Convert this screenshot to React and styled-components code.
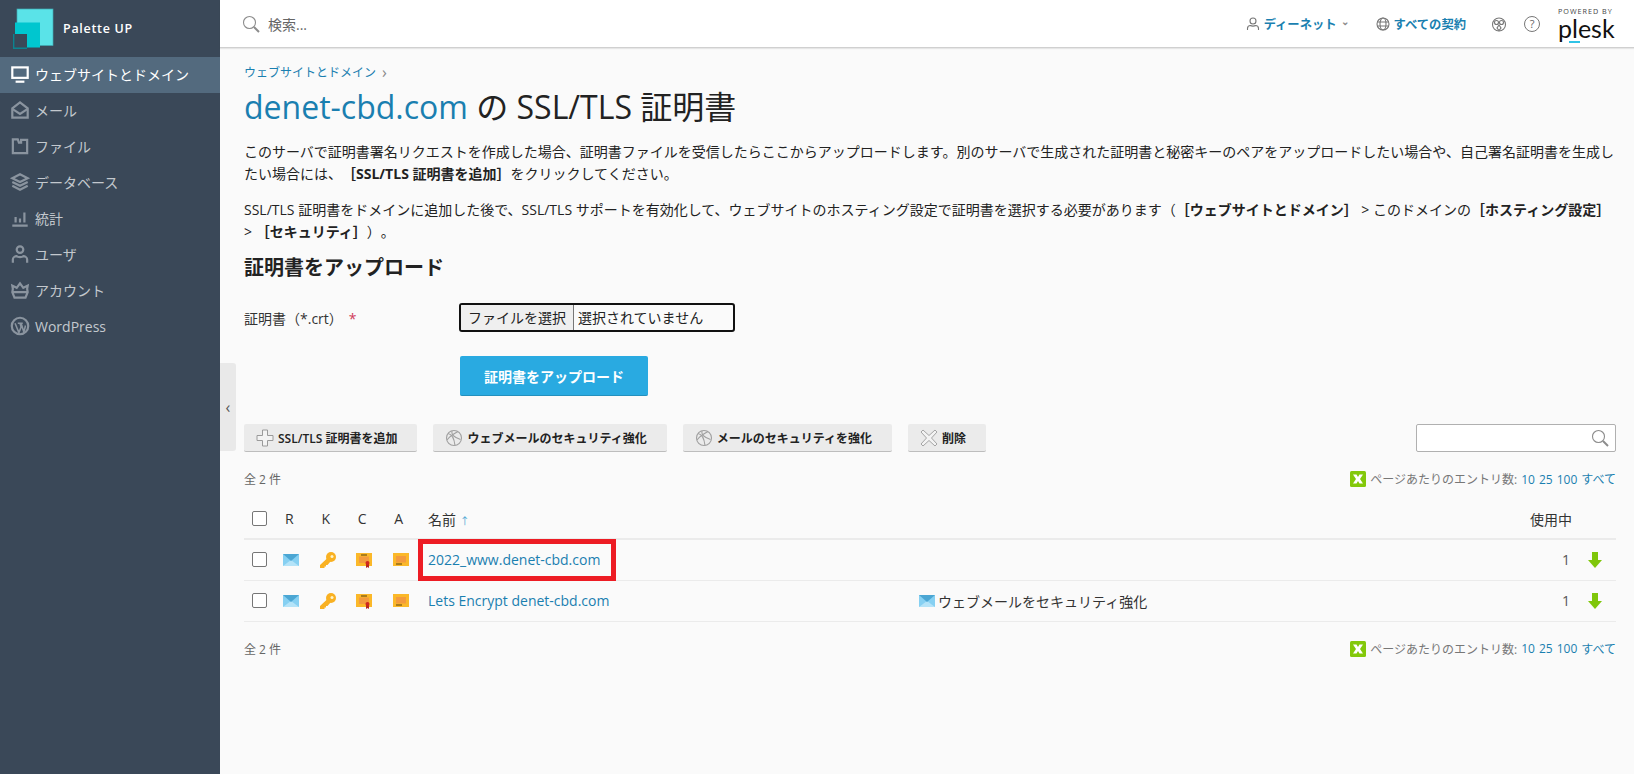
import React from 'react'
import styled, { createGlobalStyle } from 'styled-components'

const FONT = `"Open Sans", "Noto Sans CJK JP", sans-serif`

const GlobalStyle = createGlobalStyle`
    html, body {
        margin: 0;
        padding: 0;
        height: 100%;
        background: #fafafa;
        font-family: ${FONT};
        font-size: 14px;
        color: #222;
        text-spacing-trim: space-all;
    }
    * { box-sizing: border-box; }
`

const Mono = ({ children, size = 22, color = '#8a949f', sw = 2 }) => (
    <svg width={size} height={size} viewBox="0 0 20 20" fill="none" stroke={color} strokeWidth={sw}>
        {children}
    </svg>
)

const navItems = [
    { label: 'ウェブサイトとドメイン', active: true, icon: <><rect x="3" y="4" width="14" height="9.500" /><path d="M6 17h8" /></> },
    { label: 'メール', icon: <><path d="M3 8.500 10 3l7 5.500V17H3z" /><path d="M3 9l7 4.500L17 9" /></> },
    { label: 'ファイル', icon: <path d="M3.500 4H8l1 3h2V4.500h5.500V16.500h-13z" /> },
    { label: 'データベース', icon: <><path d="M10 3l7 3.500-7 3.500-7-3.500z" /><path d="M3 10l7 3.500 7-3.500" /><path d="M3 13.500 10 17l7-3.500" /></> },
    { label: '統計', icon: <path d="M3 17h14M6 14V9M10 14V10.500M14 14V5" /> },
    { label: 'ユーザ', icon: <><circle cx="10" cy="6" r="3" /><path d="M3.500 18v-3c0-2 2-3 3.500-3 1 1 5 1 6 0 1.500 0 3.500 1 3.500 3v3" /></> },
    { label: 'アカウント', icon: <path d="M3.500 9 3 6l4 2 3-4 3 4 4-2-.5 3 .5 3-2 5H5l-2-5zM4 12h12" /> },
    { label: 'WordPress', icon: <><circle cx="10" cy="10" r="7.500" /><path d="M5.500 7.500 9 16l2-5-1-3.500M8 7.500h4.500M11 7.500l2.500 8 1.500-6" strokeWidth="1.400" /></> },
]

const Globe = ({ size = 18, color = '#a0a0a0' }) => (
    <svg width={size} height={size} viewBox="0 0 18 18" fill="none" stroke={color} strokeWidth="1.100">
        <circle cx="9" cy="9" r="7.500" />
        <path d="M3 4.500c3 .5 6 3 7 12M2 11c3-4 8-7 11-8.500M7 2c-1 3 1 6 8.500 8.500" />
    </svg>
)

const CertIcon = ({ seal }) => (
    <svg width="16" height="16" viewBox="0 0 16 16">
        <rect y="1" width="16" height="13" fill="#fbb829" />
        <rect x="3" y={seal ? 4.500 : 4} width="10" height="6.500" fill="#f39a3e" />
        <path d={seal ? 'M5 3h6' : 'M3 12h6'} stroke="#5a430e" strokeWidth="1" />
        {seal && <><path d="M10 11v5l1.500-1 1.500 1v-5z" fill="#b7281f" /><circle cx="11.500" cy="11" r="2" fill="#d0281e" /></>}
    </svg>
)

const Mail = () => (
    <svg width="16" height="12" viewBox="0 0 16 12">
        <rect width="16" height="12" fill="#86d0f2" />
        <path d="M0 12 8 6l8 6z" fill="#b4e3f8" />
        <path d="M0 0h16L8 7z" fill="#4ba6d3" />
    </svg>
)

const KeyIcon = () => (
    <svg width="16" height="16" viewBox="0 0 16 16">
        <circle cx="11" cy="5" r="5" fill="#f9b122" />
        <circle cx="12" cy="4.500" r="1.500" fill="#fff3c8" />
        <path d="M7.500 6 0 13v3h4.500v-1.500H6V13h1.500l3-3.500z" fill="#f9b122" />
    </svg>
)

const ArrowDown = () => (
    <svg width="14" height="16" viewBox="0 0 14 16">
        <path d="M4 0h6v8h4l-7 8-7-8h4z" fill="#7fc60a" />
    </svg>
)

const Excel = () => (
    <svg width="16" height="16" viewBox="0 0 16 16">
        <rect width="16" height="16" rx="1.500" fill="#83c80a" />
        <path d="M3 3.500h3.500L8 6l1.500-2.500H13L10 8l3 4.500H9.500L8 10l-1.500 2.500H3L6 8z" fill="#fff" />
    </svg>
)

const Search = ({ size = 18 }) => (
    <svg width={size} height={size} viewBox="0 0 18 18" fill="none" stroke="#8c8c8c" strokeWidth="1.100">
        <circle cx="7.500" cy="7.500" r="6" />
        <path d="M12 12l5 5" strokeWidth="2" />
    </svg>
)

function PerPage() {
    return (
        <PerPageBox>
            <Excel />
            <span>ページあたりのエントリ数:</span>
            <Link>10</Link>
            <Link>25</Link>
            <Link>100</Link>
            <Link>すべて</Link>
        </PerPageBox>
    )
}

function CertRow({ name, marked, extra }) {
    return (
        <tr>
            <Cell><CheckBox /></Cell>
            <Cell><Mail /></Cell>
            <Cell><KeyIcon /></Cell>
            <Cell><CertIcon seal /></Cell>
            <Cell><CertIcon /></Cell>
            <NameCell>
                <Link>{name}</Link>
                {marked && <RedBox />}
            </NameCell>
            <ExtraCell>
                {extra && <ExtraBox><Mail />{extra}</ExtraBox>}
            </ExtraCell>
            <UsedCell>1</UsedCell>
            <ArrowCell><ArrowDown /></ArrowCell>
        </tr>
    )
}

function App() {
    return (
        <Page>
            <GlobalStyle />
            <Sidebar>
                <Brand>
                    <svg width="42" height="42" viewBox="0 0 42 42">
                        <rect x="4" y="1" width="36" height="36.500" fill="#5ae3e8" stroke="#3fa9b3" strokeWidth=".7" />
                        <rect x="2" y="14.500" width="25" height="25" fill="#00c6cf" />
                        <rect x="1" y="26" width="13" height="14" fill="#3a4858" />
                        <path d="M.7 26V40.300H14" fill="none" stroke="#0c8390" strokeWidth="1.400" />
                    </svg>
                    <BrandName>Palette UP</BrandName>
                </Brand>
                {navItems.map(item => (
                    <NavItem key={item.label} $active={item.active}>
                        <Mono color={item.active ? '#fff' : '#8a949f'}>{item.icon}</Mono>
                        <span>{item.label}</span>
                    </NavItem>
                ))}
            </Sidebar>

            <Main>
                <Header>
                    <Search />
                    <SearchHint>検索...</SearchHint>
                    <HeaderRight>
                        <AccountLink>
                            <svg width="14" height="14" viewBox="0 0 14 14" fill="none" stroke="#777" strokeWidth="1.100">
                                <circle cx="7" cy="4" r="3" />
                                <path d="M1.500 13v-1.500C1.500 9.500 3 8.500 4.500 8.500c1 .8 4 .8 5 0 1.500 0 3 1 3 3V13" />
                            </svg>
                            <span>ディーネット</span>
                            <Caret>⌄</Caret>
                        </AccountLink>
                        <HeadLink>
                            <svg width="14" height="14" viewBox="0 0 14 14" fill="none" stroke="#777" strokeWidth="1.100">
                                <circle cx="7" cy="7" r="6" />
                                <ellipse cx="7" cy="7" rx="3" ry="6" />
                                <path d="M1.500 5h11M1.500 9h11" />
                            </svg>
                            <span>すべての契約</span>
                        </HeadLink>
                        <MonkeyIcon width="16" height="16" viewBox="0 0 16 16" fill="none" stroke="#777" strokeWidth="1.100">
                            <circle cx="8" cy="8.500" r="6.500" />
                            <circle cx="5.500" cy="6.500" r="2" />
                            <circle cx="10.500" cy="6.500" r="2" />
                            <path d="M8 9l-2 3 2 2.500 2-2.500z" />
                        </MonkeyIcon>
                        <HelpIcon>?</HelpIcon>
                        <Plesk>
                            <Powered>POWERED BY</Powered>
                            <PleskName>plesk</PleskName>
                            <PleskBar />
                        </Plesk>
                    </HeaderRight>
                </Header>

                <Content>
                    <Crumbs><Link>ウェブサイトとドメイン</Link><CrumbSep>›</CrumbSep></Crumbs>
                    <Title><Link>denet-cbd.com</Link> の SSL/TLS 証明書</Title>
                    <Para>
                        このサーバで証明書署名リクエストを作成した場合、証明書ファイルを受信したらここからアップロードします。別のサーバで生成された証明書と秘密キーのペアをアップロードしたい場合や、自己署名証明書を生成したい場合には、<b>［SSL/TLS 証明書を追加］</b>をクリックしてください。
                    </Para>
                    <Para>
                        SSL/TLS 証明書をドメインに追加した後で、SSL/TLS サポートを有効化して、ウェブサイトのホスティング設定で証明書を選択する必要があります（<b>［ウェブサイトとドメイン］</b> &gt; このドメインの<b>［ホスティング設定］</b> &gt; <b>［セキュリティ］</b>）。
                    </Para>

                    <SectionTitle>証明書をアップロード</SectionTitle>

                    <FormRow>
                        <FieldLabel>証明書（*.crt）<Required>*</Required></FieldLabel>
                        <FileBox>
                            <FileButton>ファイルを選択</FileButton>
                            <FileName>選択されていません</FileName>
                        </FileBox>
                    </FormRow>
                    <UploadButton>証明書をアップロード</UploadButton>

                    <Toolbar>
                        <ToolButton>
                            <svg width="18" height="18" viewBox="0 0 18 18" fill="#f3f3f3" stroke="#9a9a9a">
                                <path d="M6.500 1h5v5.500H17v5h-5.500V17h-5v-5.500H1v-5h5.500z" />
                            </svg>
                            SSL/TLS 証明書を追加
                        </ToolButton>
                        <ToolButton><Globe />ウェブメールのセキュリティ強化</ToolButton>
                        <ToolButton><Globe />メールのセキュリティを強化</ToolButton>
                        <ToolButton>
                            <svg width="18" height="18" viewBox="0 0 18 18" fill="#f3f3f3" stroke="#a5a5a5">
                                <path d="M3 1l6 5.500L15 1l2 2-5.500 6 5.500 6-2 2-6-5.500L3 17l-2-2 5.500-6L1 3z" />
                            </svg>
                            削除
                        </ToolButton>
                        <SearchBox><Search /></SearchBox>
                    </Toolbar>

                    <ListMeta>
                        <Total>全 2 件</Total>
                        <PerPage />
                    </ListMeta>

                    <Table>
                        <thead>
                            <tr>
                                <HeadCell><CheckBox /></HeadCell>
                                <LetterHead>R</LetterHead>
                                <LetterHead>K</LetterHead>
                                <LetterHead>C</LetterHead>
                                <LetterHead>A</LetterHead>
                                <NameHead>名前 <SortMark>↑</SortMark></NameHead>
                                <HeadCell />
                                <UsedHead>使用中</UsedHead>
                                <HeadCell />
                            </tr>
                        </thead>
                        <tbody>
                            <CertRow name="2022_www.denet-cbd.com" marked />
                            <CertRow name="Lets Encrypt denet-cbd.com" extra="ウェブメールをセキュリティ強化" />
                        </tbody>
                    </Table>

                    <ListMeta>
                        <Total>全 2 件</Total>
                        <PerPage />
                    </ListMeta>
                </Content>

                <Collapse>‹</Collapse>
            </Main>
        </Page>
    )
}

export default App

const Page = styled.div`
    display: flex;
    min-height: 100vh;
    height: 774px;
    overflow: hidden;
`

const Sidebar = styled.aside`
    width: 220px;
    flex: none;
    background: #3a4858;
`

const Brand = styled.div`
    height: 57px;
    display: flex;
    align-items: center;
    padding: 0 0 0 13px;
    gap: 8px;
`

const BrandName = styled.div`
    color: #fff;
    font-size: 12.500px;
    font-weight: 600;
    letter-spacing: .7px;
`

const NavItem = styled.div`
    height: 36px;
    display: flex;
    align-items: center;
    gap: 4px;
    padding: 0 0 2px 9px;
    font-size: 14px;
    color: ${p => (p.$active ? '#fff' : '#c3c8ce')};
    background: ${p => (p.$active ? '#536a7e' : 'transparent')};
`

const Main = styled.main`
    flex: 1;
    min-width: 0;
    position: relative;
`

const Header = styled.header`
    height: 48px;
    background: #fff;
    border-bottom: 1px solid #d0d0d0;
    box-shadow: 0 1px 1px rgba(0,0,0,.08);
    display: flex;
    align-items: center;
    padding: 0 17px 0 22px;
`

const SearchHint = styled.span`
    margin-left: 8px;
    font-size: 14px;
    color: #666;
`

const HeaderRight = styled.div`
    margin-left: auto;
    display: flex;
    align-items: center;
    gap: 21px;
`

const HeadLink = styled.div`
    display: flex;
    align-items: center;
    gap: 4px;
    font-size: 12.300px;
    font-weight: 600;
    color: #1a7fb0;
`

const AccountLink = styled(HeadLink)`
    margin-right: 6px;
`

const Caret = styled.span`
    color: #888;
    font-size: 10px;
    margin-top: -5px;
`

const MonkeyIcon = styled.svg`
    margin: 0 -4px 0 4px;
`

const HelpIcon = styled.div`
    width: 16px;
    height: 16px;
    border: 1px solid #777;
    border-radius: 50%;
    font-size: 11px;
    line-height: 14px;
    text-align: center;
    color: #666;
`

const Plesk = styled.div`
    width: 59px;
    position: relative;
    margin-left: -3px;
`

const Powered = styled.div`
    font-size: 7.200px;
    letter-spacing: 1px;
    line-height: 9px;
    white-space: nowrap;
    color: #444;
`

const PleskName = styled.div`
    font-size: 25px;
    line-height: 24px;
    color: #111;
    font-family: "Lato", sans-serif;
    font-weight: 400;
`

const PleskBar = styled.div`
    position: absolute;
    left: 11px;
    bottom: -3px;
    width: 11px;
    height: 2px;
    background: #2fc3e6;
`

const Content = styled.div`
    padding: 15px 18px 0 24px;
`

const Link = styled.span`
    color: #1a7fb0;
`

const Crumbs = styled.div`
    font-size: 12px;
    line-height: 20px;
    display: flex;
    gap: 6px;
`

const CrumbSep = styled.span`
    color: #888;
    font-size: 16px;
    line-height: 18px;
`

const Title = styled.h1`
    font-size: 32px;
    font-weight: 400;
    line-height: 44px;
    margin: 2px 0 12px;
    color: #222;
`

const Para = styled.p`
    margin: 0 0 15px;
    font-size: 14px;
    line-height: 21.500px;
    color: #222;
    b { font-weight: 700; }
`

const SectionTitle = styled.h2`
    font-size: 20px;
    line-height: 26px;
    font-weight: 700;
    margin: -2px 0 22px;
`

const FormRow = styled.div`
    display: flex;
    align-items: center;
`

const FieldLabel = styled.div`
    width: 215px;
    font-size: 14px;
    color: #333;
`

const Required = styled.span`
    color: #d03a5a;
    margin-left: 6px;
`

const FileBox = styled.div`
    width: 276px;
    height: 29px;
    border: 2px solid #111;
    border-radius: 3px;
    display: flex;
    align-items: stretch;
    overflow: hidden;
    font-size: 14px;
`

const FileButton = styled.div`
    width: 113px;
    background: #efefef;
    border-right: 1px solid #777;
    text-align: center;
    line-height: 25px;
`

const FileName = styled.div`
    padding-left: 4px;
    line-height: 25px;
`

const UploadButton = styled.button`
    display: block;
    margin: 24px 0 0 216px;
    width: 188px;
    height: 40px;
    border: none;
    border-bottom: 1px solid #2390bd;
    border-radius: 2px;
    background: #29aae1;
    color: #fff;
    font-family: ${FONT};
    font-size: 14px;
    font-weight: 700;
`

const Toolbar = styled.div`
    margin-top: 28px;
    display: flex;
    align-items: center;
    gap: 16px;
`

const ToolButton = styled.div`
    height: 28px;
    padding: 0 20px 0 12px;
    display: flex;
    align-items: center;
    gap: 4px;
    background: #ebebeb;
    border-bottom: 1px solid #bdbdbd;
    border-radius: 2px;
    font-size: 12px;
    font-weight: 600;
    color: #222;
`

const SearchBox = styled.div`
    margin-left: auto;
    width: 200px;
    height: 28px;
    background: #fff;
    border: 1px solid #b0b0b0;
    border-radius: 2px;
    display: flex;
    align-items: center;
    justify-content: flex-end;
    padding-right: 6px;
`

const ListMeta = styled.div`
    display: flex;
    justify-content: space-between;
    align-items: center;
    height: 20px;
    margin-top: 17px;
`

const Total = styled.span`
    font-size: 12px;
    color: #666;
`

const PerPageBox = styled.div`
    display: flex;
    align-items: center;
    gap: 4px;
    font-size: 12px;
    color: #777;
`

const Table = styled.table`
    width: 100%;
    margin-top: 10px;
    border-collapse: collapse;
    table-layout: fixed;
`

const HeadCell = styled.th`
    height: 40px;
    font-size: 13px;
    font-weight: 400;
    color: #333;
    text-align: center;
    width: 36.500px;
    border-bottom: 2px solid #ebebeb;
    &:first-child { width: 29px; }
    &:last-child { width: 42px; }
    &:nth-child(7) { width: 496px; }
`

const LetterHead = styled(HeadCell)`
    font-size: 14px;
    padding-right: 5px;
`

const NameHead = styled(HeadCell)`
    text-align: left;
    padding-left: 9px;
    width: 266px;
    font-size: 14px;
`

const UsedHead = styled(HeadCell)`
    text-align: right;
    width: auto;
    padding-right: 2px;
    font-size: 14px;
`

const SortMark = styled.span`
    font-size: 10px;
    color: #4ba6d3;
`

const Cell = styled.td`
    height: 41px;
    text-align: center;
    vertical-align: middle;
    border-bottom: 1px solid #ebebeb;
    svg { display: block; margin: 0 auto; }
`

const NameCell = styled(Cell)`
    text-align: left;
    padding-left: 9px;
    position: relative;
    font-size: 14px;
`

const RedBox = styled.div`
    position: absolute;
    left: -1px;
    top: -1px;
    width: 198px;
    height: 42px;
    border: 5px solid #ed1c24;
`

const ExtraCell = styled(Cell)`
    text-align: left;
`

const ExtraBox = styled.div`
    display: flex;
    align-items: center;
    gap: 3px;
    margin-left: 233px;
    font-size: 14px;
    color: #333;
    white-space: nowrap;
    svg { margin: 0; }
`

const UsedCell = styled(Cell)`
    text-align: right;
    padding-right: 4px;
    font-size: 14px;
    color: #555;
`

const ArrowCell = styled(Cell)``

const CheckBox = styled.div`
    width: 15px;
    height: 15px;
    border: 1px solid #767676;
    border-radius: 2px;
    background: #fff;
    margin: 0 0 0 7px;
`

const Collapse = styled.div`
    position: absolute;
    left: 0;
    top: 363px;
    width: 16px;
    height: 88px;
    background: #e9e9e9;
    border-radius: 0 3px 3px 0;
    color: #555;
    font-size: 16px;
    display: flex;
    align-items: center;
    justify-content: center;
`
